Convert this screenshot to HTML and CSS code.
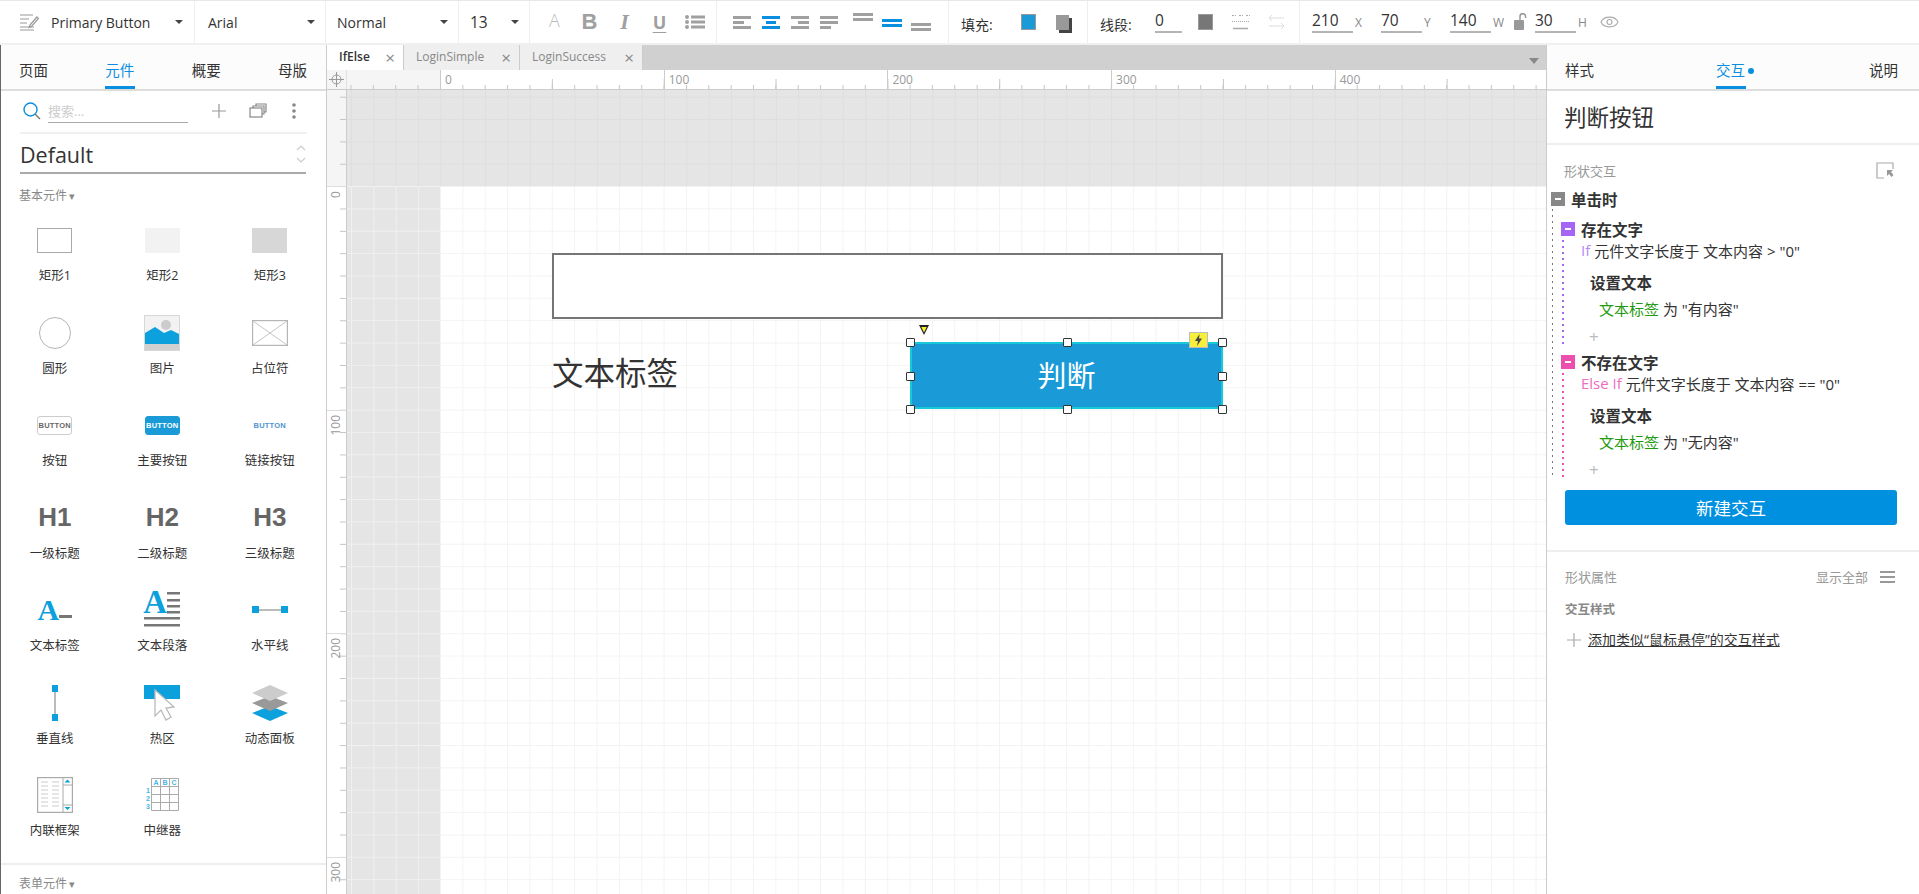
FILE: index.html
```html
<!DOCTYPE html>
<html lang="zh-CN">
<head>
  <meta charset="UTF-8" />
  <title>IfElse</title>
  <link rel="stylesheet" href="styles.css">
</head>
<body>
  <div class="toolbar">
    <div class="tb-group g-style">
      <svg class="ico" width="20" height="18" viewBox="0 0 20 18" fill="none" stroke="#999" stroke-width="1.2"><path d="M1 2h13M1 6h9M1 10h7M1 14h14M1 17h14"/><path d="M11 12l7-8 1.5 1.5-7 8-2.500 1z"/></svg>
      <span class="tb-text">Primary Button</span><i class="caret"></i>
    </div>
    <div class="tb-group g-font"><span class="tb-text">Arial</span><i class="caret"></i></div>
    <div class="tb-group g-weight"><span class="tb-text">Normal</span><i class="caret"></i></div>
    <div class="tb-group g-size"><span class="tb-text tb-num">13</span><i class="caret"></i></div>
    <div class="tb-group g-format">
      <span class="slot fmt-a">A</span>
      <span class="slot fmt-b">B</span>
      <span class="slot fmt-i">I</span>
      <span class="slot fmt-u">U</span>
      <span class="slot">
        <svg width="20" height="16" viewBox="0 0 20 16" fill="#a0a0a0"><circle cx="2" cy="3" r="2"/><circle cx="2" cy="8" r="2"/><circle cx="2" cy="13" r="2"/><path d="M6 1.500h14v3H6zM6 6.500h14v3H6zM6 11.500h14v3H6z"/></svg>
      </span>
    </div>
    <div class="tb-group g-align">
      <span class="slot"><svg width="18" height="13" viewBox="0 0 18 13" fill="#a0a0a0"><path d="M0 0h18v3H0zM0 5h11v3H0zM0 10h18v3H0z"/></svg></span>
      <span class="slot"><svg width="18" height="13" viewBox="0 0 18 13" fill="#0a8fe0"><path d="M0 0h18v3H0zM4 5h10v3H4zM0 10h18v3H0z"/></svg></span>
      <span class="slot"><svg width="18" height="13" viewBox="0 0 18 13" fill="#a0a0a0"><path d="M0 0h18v3H0zM7 5h11v3H7zM0 10h18v3H0z"/></svg></span>
      <span class="slot"><svg width="18" height="13" viewBox="0 0 18 13" fill="#a0a0a0"><path d="M0 0h18v3H0zM0 5h18v3H0zM0 10h11v3H0z"/></svg></span>
      <span class="slot slot-first-v"><svg class="v-top" width="20" height="8" viewBox="0 0 20 8" fill="#a0a0a0"><path d="M0 0h20v3H0zM0 5h20v3H0z"/></svg></span>
      <span class="slot"><svg class="v-mid" width="20" height="8" viewBox="0 0 20 8" fill="#0a8fe0"><path d="M0 0h20v3H0zM0 5h20v3H0z"/></svg></span>
      <span class="slot"><svg class="v-low" width="20" height="8" viewBox="0 0 20 8" fill="#a0a0a0"><path d="M0 0h20v3H0zM0 5h20v3H0z"/></svg></span>
    </div>
    <div class="tb-group g-fill">
      <span class="tb-label">填充:</span>
      <span class="swatch swatch-fill"></span>
      <span class="shadow-swatch"></span>
    </div>
    <div class="tb-group g-line">
      <span class="tb-label">线段:</span>
      <span class="field field-line">0</span>
      <span class="swatch swatch-line"></span>
      <svg class="line-style" width="18" height="16" viewBox="0 0 18 16" fill="none" stroke="#aaa"><path d="M0 1.500h4M7 1.500h4M14 1.500h4" stroke-dasharray="2 1"/><path d="M0 7.500h18" stroke-dasharray="1 1"/><path d="M1 14.500h15" stroke-width="1.500"/></svg>
      <svg class="line-arrows" width="17" height="16" viewBox="0 0 17 16" fill="none" stroke="#ddd"><path d="M4 1L1 4l3 3M1 4h15M13 9l3 3-3 3M1 12h15"/></svg>
    </div>
    <div class="tb-group g-geom">
      <span class="field">210</span><span class="axis">X</span>
      <span class="field">70</span><span class="axis">Y</span>
      <span class="field">140</span><span class="axis axis-w">W</span>
      <svg class="lock" width="13" height="18" viewBox="0 0 13 18" fill="#999"><rect x="0" y="7" width="10" height="10" rx="1"/><path d="M6 7V3.500a2.800 2.800 0 0 1 5.600 0V5" fill="none" stroke="#999" stroke-width="1.500"/></svg>
      <span class="field">30</span><span class="axis">H</span>
      <svg class="eye" width="19" height="14" viewBox="0 0 19 14" fill="none" stroke="#aaa" stroke-width="1.100"><path d="M1 7c3-6.500 14-6.500 17 0-3 6.500-14 6.500-17 0z"/><circle cx="9.500" cy="7" r="2.500"/></svg>
    </div>
  </div>

  <div class="main">
    <aside class="left-panel">
      <div class="panel-tabs">
        <span>页面</span><span class="active">元件</span><span>概要</span><span>母版</span>
      </div>
      <div class="search-row">
        <svg class="search-ico" width="18" height="18" viewBox="0 0 18 18" fill="none" stroke-width="1.400"><circle cx="7.500" cy="7.500" r="6.500" stroke="#0a8fe0"/><path d="M12 12l5 5" stroke="#777"/></svg>
        <span class="search-input">搜索...</span>
        <svg class="add-ico" width="14" height="14" viewBox="0 0 14 14" stroke="#999" stroke-width="1.200"><path d="M7 0v14M0 7h14"/></svg>
        <svg class="copy-ico" width="18" height="15" viewBox="0 0 18 15" fill="none" stroke="#888" stroke-width="1.200"><rect x="1" y="5" width="12" height="9"/><path d="M4 5V3h11v8h-2M7 3V1h10v8h-2"/></svg>
        <svg class="more-ico" width="4" height="16" viewBox="0 0 4 16" fill="#888"><circle cx="2" cy="2" r="1.800"/><circle cx="2" cy="8" r="1.800"/><circle cx="2" cy="14" r="1.800"/></svg>
      </div>
      <div class="lib-row">
        <span class="lib-name">Default</span>
        <svg width="10" height="20" viewBox="0 0 10 20" fill="none" stroke="#ccc" stroke-width="1.200"><path d="M1 6l4-4 4 4M1 14l4 4 4-4"/></svg>
      </div>
      <div class="lib-group">基本元件<i class="mini-caret">▾</i></div>

      <div class="widgets">
        <div class="widget"><div class="w-ico"><span class="w-rect w-rect1"></span></div><span>矩形1</span></div>
        <div class="widget"><div class="w-ico"><span class="w-rect w-rect2"></span></div><span>矩形2</span></div>
        <div class="widget"><div class="w-ico"><span class="w-rect w-rect3"></span></div><span>矩形3</span></div>

        <div class="widget"><div class="w-ico"><span class="w-circle"></span></div><span>圆形</span></div>
        <div class="widget"><div class="w-ico">
          <svg width="36" height="36" viewBox="0 0 36 36"><rect width="36" height="36" fill="#f2f2f2"/><rect x=".5" y=".5" width="35" height="35" fill="none" stroke="#d8d8d8"/><circle cx="22" cy="10" r="5" fill="#ccc"/><path d="M1 18l10-6 9 6 7-3 8 4v10H1z" fill="#0ca0dc"/><rect x="1" y="29" width="34" height="6" fill="#d0d0d0"/></svg>
        </div><span>图片</span></div>
        <div class="widget"><div class="w-ico">
          <svg width="36" height="26" viewBox="0 0 36 26" fill="#fff" stroke="#b5b5b5" stroke-width="1.200"><rect x=".6" y=".6" width="34.800" height="24.800"/><path d="M1 1l34 24M35 1L1 25" stroke-width=".8"/></svg>
        </div><span>占位符</span></div>

        <div class="widget"><div class="w-ico"><span class="w-btn">BUTTON</span></div><span>按钮</span></div>
        <div class="widget"><div class="w-ico"><span class="w-btn w-btn-primary">BUTTON</span></div><span>主要按钮</span></div>
        <div class="widget"><div class="w-ico"><span class="w-btn w-btn-link">BUTTON</span></div><span>链接按钮</span></div>

        <div class="widget"><div class="w-ico"><span class="w-h">H1</span></div><span>一级标题</span></div>
        <div class="widget"><div class="w-ico"><span class="w-h">H2</span></div><span>二级标题</span></div>
        <div class="widget"><div class="w-ico"><span class="w-h">H3</span></div><span>三级标题</span></div>

        <div class="widget"><div class="w-ico"><span class="w-a">A</span><span class="w-a-line"></span></div><span>文本标签</span></div>
        <div class="widget"><div class="w-ico w-para">
          <span class="w-a w-a-para">A</span>
          <svg width="36" height="36" viewBox="0 0 36 36" fill="#777"><path d="M23 0h13v2.500H23zM23 7h13v2.500H23zM23 13h13v2.500H23zM23 19h13v2.500H23zM0 25h36v2.500H0zM0 32h36v2.500H0z"/></svg>
        </div><span>文本段落</span></div>
        <div class="widget"><div class="w-ico">
          <svg width="36" height="8" viewBox="0 0 36 8"><rect y="3" width="36" height="2" fill="#bbb"/><rect width="7" height="7" fill="#0ca0dc"/><rect x="29" width="7" height="7" fill="#0ca0dc"/></svg>
        </div><span>水平线</span></div>

        <div class="widget"><div class="w-ico">
          <svg width="8" height="36" viewBox="0 0 8 36"><rect x="3" width="2" height="36" fill="#bbb"/><rect x="1" width="6" height="7" fill="#0ca0dc"/><rect x="1" y="29" width="6" height="7" fill="#0ca0dc"/></svg>
        </div><span>垂直线</span></div>
        <div class="widget"><div class="w-ico">
          <svg width="36" height="36" viewBox="0 0 36 36"><rect width="36" height="14" fill="#0ca0dc"/><path d="M11 5v26l6-6 5 10 5-3-5-9 8-1z" fill="#fff" stroke="#bbb" stroke-width="1.300"/></svg>
        </div><span>热区</span></div>
        <div class="widget"><div class="w-ico">
          <svg width="36" height="36" viewBox="0 0 36 36"><path d="M18 21l18 7-18 8-18-8z" fill="#0ca0dc"/><path d="M18 11l18 7-18 8-18-8z" fill="#999"/><path d="M18 0l18 8-18 8-18-8z" fill="#ccc"/></svg>
        </div><span>动态面板</span></div>

        <div class="widget"><div class="w-ico">
          <svg width="36" height="36" viewBox="0 0 36 36" fill="none"><rect x=".6" y=".6" width="34.800" height="34.800" fill="#fff" stroke="#aaa" stroke-width="1.200"/><path d="M26 1v34M26 8h9M26 28h9" stroke="#aaa"/><path d="M4 5h7M15 5h7M4 9h7M15 9h7M4 13h7M15 13h7M4 17h7M15 17h7M4 21h7M15 21h7M4 25h7M15 25h7M4 29h7M15 29h7" stroke="#ccc"/><path d="M30.500 2.500l3 3h-6zM30.500 33l3-3h-6z" fill="#0ca0dc"/></svg>
        </div><span>内联框架</span></div>
        <div class="widget"><div class="w-ico">
          <svg class="repeater" width="33" height="34" viewBox="0 0 33 34" fill="none" font-family="Liberation Sans" font-size="7" font-weight="700"><path d="M5.500.500h27v32h-27zM5.500 8.500h27M5.500 16.500h27M5.500 24.500h27M14.500.500v32M23.500.500v32" stroke="#aaa"/><g fill="#45b6e6"><text x="7.500" y="7">A</text><text x="16.500" y="7">B</text><text x="25.500" y="7">C</text><text x="0" y="15">1</text><text x="0" y="23">2</text><text x="0" y="31">3</text></g></svg>
        </div><span>中继器</span></div>
      </div>

      <div class="lib-footer">表单元件<i class="mini-caret">▾</i></div>
    </aside>

    <section class="workspace">
      <div class="tabs">
        <div class="tab tab-active tab-ifelse">IfElse<span class="close">×</span></div>
        <div class="tab tab-simple">LoginSimple<span class="close">×</span></div>
        <div class="tab tab-success">LoginSuccess<span class="close">×</span></div>
        <i class="tabs-menu"></i>
      </div>

      <div class="ruler-h">
        <div class="ruler-corner">
          <svg width="15" height="15" viewBox="0 0 15 15" fill="none" stroke="#999"><circle cx="7.500" cy="7.500" r="4.500"/><path d="M7.500 0v15M0 7.500h15"/></svg>
        </div>
        <div class="ruler-off"></div>
        <div class="ruler-scale">
          <span>0</span><span>100</span><span>200</span><span>300</span><span>400</span>
        </div>
      </div>

      <div class="canvas-row">
        <div class="ruler-v">
          <div class="ruler-v-off"></div>
          <span><i>0</i></span><span><i>100</i></span><span><i>200</i></span><span><i>300</i></span>
        </div>
        <div class="stage">
          <div class="paste-top"></div>
          <div class="stage-lower">
            <div class="paste-left"></div>
            <div class="page">
              <div class="shape-box"></div>
              <div class="shape-label">文本标签</div>
              <div class="shape-btn">判断</div>
              <i class="marker"></i>
              <i class="handle h-tl"></i><i class="handle h-tc"></i><i class="handle h-tr"></i>
              <i class="handle h-ml"></i><i class="handle h-mr"></i>
              <i class="handle h-bl"></i><i class="handle h-bc"></i><i class="handle h-br"></i>
              <span class="bolt">
                <svg width="9" height="12" viewBox="0 0 9 12" fill="#444"><path d="M5.500 0L1 7h3l-1 5 5-7.500H5z"/></svg>
              </span>
            </div>
          </div>
        </div>
      </div>
    </section>

    <aside class="right-panel">
      <div class="panel-tabs panel-tabs-right">
        <span>样式</span><span class="active">交互<b class="dot"></b></span><span>说明</span>
      </div>
      <h2 class="shape-title">判断按钮</h2>
      <div class="section-head">
        <span>形状交互</span>
        <svg width="18" height="17" viewBox="0 0 18 17" fill="none" stroke="#aaa" stroke-width="1.200"><path d="M17 7V1H1v15h7"/><path d="M11 8h6l-2 2 2.500 3-2 2-2.500-3-2 2z" fill="#999" stroke="none"/></svg>
      </div>

      <div class="tree">
        <div class="row row-event"><i class="box box-grey"></i><strong>单击时</strong></div>
        <div class="event-body">
          <div class="row row-case"><i class="box box-purple"></i><strong>存在文字</strong></div>
          <div class="case-body case-purple">
            <div class="row row-cond"><em class="kw-if">If</em> 元件文字长度于 文本内容 &gt; "0"</div>
            <div class="row row-act"><strong>设置文本</strong></div>
            <div class="row row-target"><em class="target">文本标签</em> 为 "有内容"</div>
            <div class="row row-add">+</div>
          </div>
          <div class="row row-case"><i class="box box-pink"></i><strong>不存在文字</strong></div>
          <div class="case-body case-pink">
            <div class="row row-cond"><em class="kw-else">Else If</em> 元件文字长度于 文本内容 == "0"</div>
            <div class="row row-act"><strong>设置文本</strong></div>
            <div class="row row-target"><em class="target">文本标签</em> 为 "无内容"</div>
            <div class="row row-add">+</div>
          </div>
        </div>
      </div>

      <button class="new-btn" type="button">新建交互</button>

      <div class="props">
        <div class="props-head">
          <span>形状属性</span>
          <span class="show-all">显示全部</span>
          <svg width="15" height="12" viewBox="0 0 15 12" fill="#999"><path d="M0 0h15v2H0zM0 5h15v2H0zM0 10h15v2H0z"/></svg>
        </div>
        <div class="props-sub">交互样式</div>
        <div class="props-link">
          <svg width="14" height="14" viewBox="0 0 14 14" stroke="#aaa" stroke-width="1.200"><path d="M7 0v14M0 7h14"/></svg>
          <a>添加类似“鼠标悬停”的交互样式</a>
        </div>
      </div>
    </aside>
  </div>
</body>
</html>
```

FILE: styles.css
```css
* {
  box-sizing: border-box;
}
html, body {
  margin: 0;
  height: 100%;
  overflow: hidden;
}
body {
  display: flex;
  flex-direction: column;
  background: #fff;
  color: #333;
  font-family: "Open Sans", "Noto Sans CJK SC", sans-serif;
  font-size: 14px;
}

/* toolbar */
.toolbar {
  display: flex;
  height: 45px;
  flex: none;
  border-top: 1px solid #e8e8e8;
  border-bottom: 2px solid #f0f0f0;
}
.tb-group {
  display: flex;
  align-items: center;
  flex: none;
  border-right: 1px solid #eee;
}
.g-style { width: 195px; padding: 0 11px 0 19px; }
.g-font { width: 131px; padding: 0 10px 0 13px; }
.g-weight { width: 133px; padding: 0 10px 0 11px; }
.g-size { width: 71px; padding: 0 10px 0 11px; }
.g-format { width: 187px; padding-left: 7px; }
.g-align { width: 232px; padding-left: 10px; }
.g-fill { width: 139px; padding-left: 12px; }
.g-line { width: 212px; padding-left: 12px; }
.g-geom { flex: 1; padding-left: 12px; border-right: 0; }
.tb-text {
  font-size: 14px;
  white-space: nowrap;
}
.tb-num {
  font-size: 15.500px;
}
.tb-label {
  width: 36px;
  margin-top: 4px;
  font-size: 14px;
  white-space: nowrap;
}
.g-style .tb-text {
  margin-left: 12px;
}
.caret {
  width: 0;
  height: 0;
  margin-left: auto;
  border-left: 4.500px solid transparent;
  border-right: 4.500px solid transparent;
  border-top: 4px solid #444;
}
.slot {
  display: flex;
  align-items: center;
  justify-content: center;
  width: 35px;
  height: 42px;
  color: #a0a0a0;
}
.g-align .slot {
  width: 29px;
}
.g-align .slot-first-v {
  margin-left: 5px;
}
.fmt-a { font-size: 18px; font-weight: 300; color: #bbb; padding-bottom: 4px; }
.fmt-b { font: bold 22px "Liberation Sans", sans-serif; }
.fmt-i { font: italic bold 22px "Liberation Serif", serif; }
.fmt-u { font-size: 18px; font-weight: 700; text-decoration: underline; text-underline-offset: 3px; }
.v-top { margin-top: -10px; }
.v-mid { margin-top: 1px; }
.v-low { margin-top: 10px; }
.swatch {
  width: 15px;
  height: 16px;
  border: 1px solid #999;
}
.swatch-fill {
  margin-left: 24px;
  background: #1a9bd7;
}
.swatch-line {
  margin-left: 16px;
  background: #777;
}
.shadow-swatch {
  width: 13px;
  height: 15px;
  margin-left: 20px;
  background: #999;
  box-shadow: 3px 3px 0 #444;
}
.field {
  display: block;
  width: 41px;
  height: 22px;
  line-height: 19px;
  font-size: 15.500px;
  border-bottom: 2px solid #b5b5b5;
}
.field-line {
  width: 27px;
  margin-left: 19px;
}
.line-style { margin-left: 19px; }
.line-arrows { margin-left: 18px; }
.axis {
  width: 28px;
  padding-left: 2px;
  font-size: 12px;
  color: #888;
}
.axis-w {
  width: 23px;
}
.lock {
  width: 13px;
  margin-right: 8px;
}
.eye {
  margin-left: -4px;
}

/* layout */
.main {
  display: flex;
  flex: 1;
  min-height: 0;
}
.left-panel {
  display: flex;
  flex-direction: column;
  flex: none;
  width: 327px;
  border-left: 1px solid #666;
  border-right: 1px solid #ccc;
}
.left-panel > * {
  flex: none;
}
.workspace {
  display: flex;
  flex-direction: column;
  flex: 1;
  min-width: 0;
}
.right-panel {
  flex: none;
  width: 373px;
  border-left: 1px solid #ccc;
}

/* panel tabs */
.panel-tabs {
  display: flex;
  justify-content: space-between;
  height: 46px;
  padding: 0 19px 0 18px;
  background: #fcfcfc;
  border-bottom: 2px solid #ddd;
}
.panel-tabs span {
  position: relative;
  height: 44px;
  padding-top: 16px;
  line-height: 20px;
  font-size: 14.500px;
}
.panel-tabs .active {
  color: #0a8fe0;
}
.panel-tabs .active::after {
  content: "";
  position: absolute;
  left: 0;
  bottom: 0;
  width: 30px;
  height: 3px;
  background: #0a8fe0;
}
.panel-tabs-right {
  padding-left: 18px;
  padding-right: 21px;
}
.panel-tabs-right .active {
  padding-right: 9px;
  margin-left: 7px;
}
.dot {
  position: absolute;
  top: 23px;
  right: 0;
  width: 6px;
  height: 6px;
  border-radius: 50%;
  background: #0a8fe0;
}

/* left panel */
.search-row {
  display: flex;
  align-items: center;
  height: 43px;
  margin: 0 19px;
  padding: 0 0 2px 3px;
  border-bottom: 2px solid #f0f0f0;
}
.search-input {
  width: 140px;
  height: 22px;
  margin-left: 7px;
  margin-top: 2px;
  font-size: 13px;
  line-height: 20px;
  color: #ccc;
  border-bottom: 1px solid #aaa;
}
.add-ico { margin-left: 24px; }
.copy-ico { margin-left: 23px; }
.more-ico { margin-left: 25px; }
.lib-row {
  display: flex;
  align-items: center;
  justify-content: space-between;
  height: 40px;
  margin: 0 20px 0 19px;
  padding-top: 2px;
  border-bottom: 2px solid #aaa;
}
.lib-name {
  font-size: 21.500px;
}
.lib-group {
  height: 44px;
  padding: 12px 0 0 18px;
  font-size: 12px;
  color: #888;
}
.mini-caret {
  margin-left: 2px;
  font-style: normal;
  font-size: 11px;
}
.widgets {
  display: grid;
  grid-template-columns: 107.500px 107.500px 107.500px;
  grid-auto-rows: 92.500px;
  height: 645px;
}
.widget {
  display: flex;
  flex-direction: column;
  align-items: center;
  font-size: 12.500px;
  line-height: 18px;
}
.w-ico {
  position: relative;
  display: flex;
  align-items: center;
  justify-content: center;
  width: 44px;
  height: 44px;
  margin-bottom: 5px;
}
.w-rect {
  width: 35px;
  height: 25px;
}
.w-rect1 { border: 1px solid #aaa; }
.w-rect2 { background: #f2f2f2; }
.w-rect3 { background: #d7d7d7; }
.w-circle {
  width: 32px;
  height: 32px;
  border: 1.500px solid #b5b5b5;
  border-radius: 50%;
}
.w-btn {
  display: block;
  width: 35px;
  height: 19px;
  border: 1px solid #ccc;
  border-radius: 3px;
  text-align: center;
  white-space: nowrap;
  font: bold 7.500px/17px "Liberation Sans", sans-serif;
  letter-spacing: .2px;
  color: #666;
}
.w-btn-primary {
  background: #1a9bd7;
  border-color: #1a9bd7;
  color: #fff;
}
.w-btn-link {
  border-color: transparent;
  color: #4f94d0;
}
.w-h {
  font: bold 26px "Liberation Sans", sans-serif;
  color: #666;
}
.w-a {
  margin-right: 14px;
  font: bold 30px/30px "Liberation Serif", serif;
  color: #0ca0dc;
}
.w-a-line {
  flex: none;
  width: 13px;
  height: 3px;
  margin: 12px 0 0 -14px;
  background: #777;
}
.w-a-para {
  position: absolute;
  left: 3px;
  top: -1px;
  margin: 0;
  font-size: 33px;
}
.lib-footer {
  height: 31px;
  padding: 10px 0 0 18px;
  font-size: 12px;
  line-height: 18px;
  color: #888;
  border-top: 2px solid #eee;
}

/* tabs */
.tabs {
  display: flex;
  align-items: stretch;
  flex: none;
  height: 25px;
  background: #d0d0d0;
  position: relative;
}
.tab {
  position: relative;
  padding: 1px 0 0 12px;
  font-size: 12px;
  line-height: 22px;
  color: #888;
  background: #efefef;
  border-right: 1px solid #ccc;
}
.tab-active {
  background: #fff;
  color: #333;
  font-weight: 600;
}
.tab-ifelse { width: 77px; }
.tab-simple { width: 116px; }
.tab-success { width: 123px; }
.close {
  position: absolute;
  right: 8px;
  top: 2px;
  font-size: 17px;
  font-weight: 400;
  color: #888;
}
.tabs-menu {
  position: absolute;
  right: 7px;
  top: 13px;
  border-left: 5px solid transparent;
  border-right: 5px solid transparent;
  border-top: 6px solid #888;
}

/* rulers */
.ruler-h {
  display: flex;
  flex: none;
  height: 20px;
  background: #fff;
  border-bottom: 1px solid #ccc;
}
.ruler-corner {
  display: flex;
  align-items: center;
  justify-content: center;
  flex: none;
  width: 20px;
  background: #f5f5f5;
  border-right: 1px solid #e0e0e0;
}
.ruler-off {
  flex: none;
  width: 93px;
  background-color: #f5f5f5;
  background-image: linear-gradient(to right, #c4c4c4 1px, transparent 1px);
  background-size: 22.370px 4px;
  background-position: 3.500px bottom;
  background-repeat: repeat-x;
}
.ruler-scale {
  display: flex;
  flex: 1;
  min-width: 0;
  background-image:
    linear-gradient(to right, #c4c4c4 1px, transparent 1px),
    linear-gradient(to right, #c4c4c4 1px, transparent 1px);
  background-size: 22.370px 4px, 111.850px 10px;
  background-position: 0 bottom, 0 bottom;
  background-repeat: repeat-x;
}
.ruler-scale span {
  flex: none;
  width: 223.700px;
  padding: 0 0 0 4px;
  font-size: 12px;
  line-height: 19px;
  color: #999;
  border-left: 1px solid #ccc;
}
.canvas-row {
  display: flex;
  flex: 1;
  min-height: 0;
}
.ruler-v {
  display: flex;
  flex-direction: column;
  flex: none;
  width: 20px;
  overflow: hidden;
  background-image: linear-gradient(to bottom, #c4c4c4 1px, transparent 1px);
  background-size: 6px 22.370px;
  background-position: right 6.700px;
  background-repeat: repeat-y;
  border-right: 1px solid #ccc;
}
.ruler-v-off {
  flex: none;
  height: 96px;
  background: #f5f5f5 linear-gradient(to bottom, #c4c4c4 1px, transparent 1px) right 6.700px / 6px 22.370px repeat-y;
}
.ruler-v span {
  display: flex;
  align-items: flex-start;
  flex: none;
  height: 223.700px;
  padding: 4px 0 0 4px;
  border-top: 1px solid #ddd;
}
.ruler-v i {
  display: block;
  font-size: 12px;
  font-style: normal;
  line-height: 10px;
  color: #999;
  writing-mode: vertical-rl;
  transform: rotate(180deg);
}

/* canvas */
.stage {
  display: flex;
  flex-direction: column;
  flex: 1;
  min-width: 0;
}
.paste-top {
  flex: none;
  height: 96px;
  background-color: #e5e5e5;
  background-image:
    linear-gradient(to right, #dedede 1px, transparent 1px),
    linear-gradient(to bottom, #dedede 1px, transparent 1px);
  background-size: 22.370px 22.370px;
  background-position: 4px 6.700px;
}
.stage-lower {
  display: flex;
  flex: 1;
  min-height: 0;
}
.paste-left {
  flex: none;
  width: 93px;
  background-color: #e5e5e5;
  background-image:
    linear-gradient(to right, #f0f0f0 1px, transparent 1px),
    linear-gradient(to bottom, #f0f0f0 1px, transparent 1px);
  background-size: 22.370px 22.370px;
  background-position: 4px 0;
}
.page {
  position: relative;
  flex: 1;
  background-color: #fff;
  background-image:
    linear-gradient(to right, #f3f3f3 1px, transparent 1px),
    linear-gradient(to bottom, #f3f3f3 1px, transparent 1px);
  background-size: 22.370px 22.370px;
}
.shape-box {
  position: absolute;
  left: 112px;
  top: 67px;
  width: 671px;
  height: 66px;
  background: #fff;
  border: 2px solid #757575;
}
.shape-label {
  position: absolute;
  left: 112px;
  top: 164px;
  font-size: 31.500px;
  line-height: 46px;
}
.shape-btn {
  position: absolute;
  left: 470px;
  top: 156px;
  width: 313px;
  height: 67px;
  background: #1a9bd7;
  border: 2px solid #17c8d8;
  border-radius: 5px;
  color: #fff;
  font-size: 29px;
  line-height: 63px;
  text-align: center;
}
.marker {
  position: absolute;
  left: 479px;
  top: 139px;
  width: 10px;
  height: 10px;
  background: #222;
  clip-path: polygon(0 0, 100% 0, 50% 100%);
}
.marker::after {
  content: "";
  position: absolute;
  left: 2px;
  top: 1.500px;
  width: 6px;
  height: 6px;
  background: #f5ee30;
  clip-path: polygon(0 0, 100% 0, 50% 100%);
}
.handle {
  position: absolute;
  width: 9px;
  height: 9px;
  background: #fff;
  border: 1px solid #333;
  border-radius: 1px;
}
.h-tl { left: 466px; top: 152px; }
.h-tc { left: 623px; top: 152px; }
.h-tr { left: 778px; top: 152px; }
.h-ml { left: 466px; top: 186px; }
.h-mr { left: 778px; top: 186px; }
.h-bl { left: 466px; top: 219px; }
.h-bc { left: 623px; top: 219px; }
.h-br { left: 778px; top: 219px; }
.bolt {
  position: absolute;
  left: 749px;
  top: 146px;
  display: flex;
  align-items: center;
  justify-content: center;
  width: 19px;
  height: 16px;
  background: #f6f03c;
  border: 1px solid #bbb;
}

/* right panel */
.shape-title {
  height: 54px;
  margin: 0;
  padding: 11px 0 0 17px;
  font-size: 22.500px;
  font-weight: 400;
  line-height: 32px;
  border-bottom: 2px solid #eee;
}
.section-head {
  display: flex;
  align-items: center;
  justify-content: space-between;
  height: 44px;
  padding: 6px 25px 0 17px;
  font-size: 13px;
  color: #999;
}
.tree {
  padding-left: 4px;
  height: 291px;
  font-size: 15px;
}
.row {
  display: flex;
  align-items: center;
  height: 20px;
  white-space: pre;
}
.row strong {
  font-size: 15.500px;
  font-weight: 700;
}
.row em {
  font-style: normal;
}
.box {
  position: relative;
  flex: none;
  width: 14px;
  height: 14px;
  margin-right: 6px;
}
.box::after {
  content: "";
  position: absolute;
  left: 4px;
  top: 6px;
  width: 6px;
  height: 2px;
  background: #fff;
}
.box-grey { background: #888; }
.box-purple { background: #a566f5; }
.box-pink { background: #ec4fae; }
.event-body {
  margin-left: 1px;
  padding: 10px 0 0 10px;
  background: linear-gradient(to bottom, #777 2px, transparent 2px) left top / 1px 6px repeat-y;
}
.row-case {
  margin-left: -1px;
}
.case-body {
  padding-left: 19px;
  padding-bottom: 1px;
  margin-bottom: 5px;
}
.case-pink {
  margin-bottom: 0;
  padding-bottom: 0;
}
.case-purple {
  background: linear-gradient(to bottom, #a566f5 2px, transparent 2px) left top / 2px 6px repeat-y;
}
.case-pink {
  background: linear-gradient(to bottom, #ec4fae 2px, transparent 2px) left top / 2px 6px repeat-y;
}
.row-cond { margin-top: 1px; }
.row-act { margin-top: 12px; padding-left: 9px; }
.row-target { margin-top: 6px; padding-left: 18px; }
.row-add {
  margin-top: 8px;
  padding-left: 8px;
  color: #bbb;
  font-size: 17px;
}
.kw-if { color: #b48af7; }
.kw-else { color: #f06cc0; }
.target { color: #1f9a10; }
.new-btn {
  display: block;
  width: 332px;
  height: 35px;
  margin: 10px 0 0 18px;
  background: #0090e0;
  border: 0;
  border-radius: 3px;
  color: #fff;
  font-family: inherit;
  font-size: 17.500px;
}
.props {
  margin-top: 25px;
  padding: 0 24px 0 18px;
  border-top: 2px solid #eee;
}
.props-head {
  display: flex;
  align-items: center;
  margin-top: 15px;
  font-size: 13px;
  line-height: 20px;
  color: #999;
}
.show-all {
  margin-left: auto;
  margin-right: 12px;
}
.props-sub {
  margin-top: 13px;
  font-size: 12.500px;
  font-weight: 700;
  line-height: 20px;
  color: #888;
}
.props-link {
  display: flex;
  align-items: center;
  gap: 7px;
  margin-top: 10px;
  padding-left: 2px;
  font-size: 14px;
  line-height: 20px;
}
.props-link a {
  color: #333;
  text-decoration: underline;
}
```
